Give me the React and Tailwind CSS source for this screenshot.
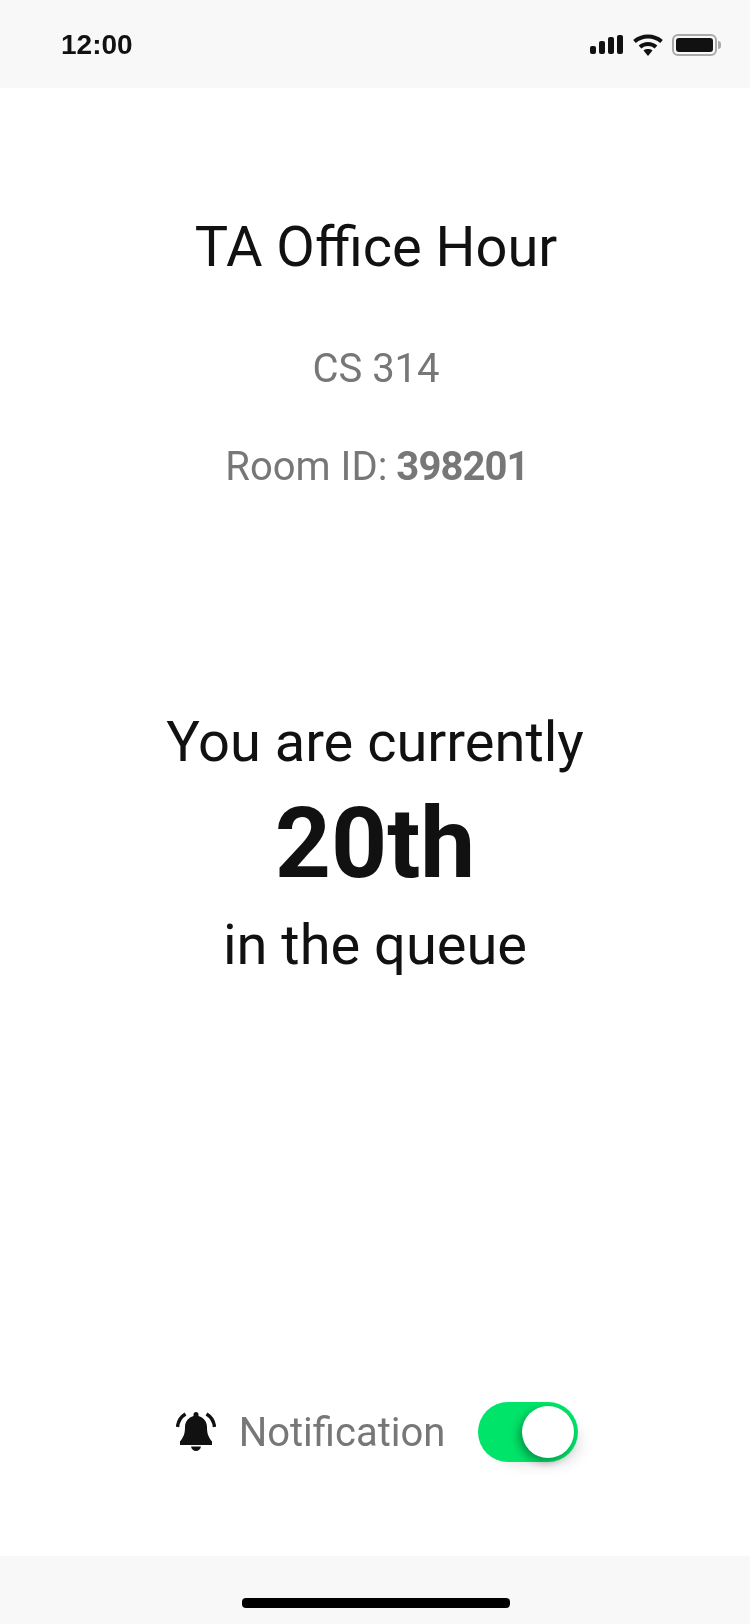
const StatusIcons = () => (
  <div className="flex items-center">
    <svg width="33" height="20" viewBox="0 0 33 20" fill="#111">
      <rect x="0" y="11" width="6" height="8" rx="2" />
      <rect x="9" y="6" width="6" height="13" rx="2" />
      <rect x="18" y="2" width="6" height="17" rx="2" />
      <rect x="27" y="0" width="6" height="19" rx="2" />
    </svg>
    <svg className="ml-[10px]" width="30" height="22" viewBox="0 0 30 22" fill="none" stroke="#111" strokeWidth="4">
      <path d="M1.500 7.500C9 .8 21 .8 28.500 7.500" />
      <path d="M7 13C11.500 9 18.500 9 23 13" />
      <path d="M10.500 16.500 L15 22 L19.500 16.500 C17 14.600 13 14.600 10.500 16.500Z" fill="#111" stroke="none" />
    </svg>
    <div className="ml-[9px] flex items-center">
      <div className="w-[45px] h-[22px] rounded-[6px] border-2 border-[#aaaaaa] p-[2px]">
        <div className="w-full h-full rounded-[3px] bg-[#111111]" />
      </div>
      <div className="w-[3px] h-[8px] ml-[1px] rounded-r-full bg-[#aaaaaa]" />
    </div>
  </div>
);

const Bell = () => (
  <svg width="40" height="40" viewBox="0 0 40 40" fill="#111">
    <path d="M20 0c1.500 0 2.500 1 2.500 2.500V4c5 1.500 8.500 5.500 8.500 11 0 6 1 9.500 5 14.500V33H4v-3.500c4-5 5-8.500 5-14.500 0-5.500 3.500-9.500 8.500-11V2.500C17.500 1 18.500 0 20 0z" />
    <path d="M15 34.500h10c-.6 2.800-2.500 4.500-5 4.500s-4.400-1.700-5-4.500z" />
    <path d="M9.500 2C4.500 5 2 9.500 1.500 15" fill="none" stroke="#111" strokeWidth="3.400" />
    <path d="M30.500 2c5 3 7.500 7.500 8 13" fill="none" stroke="#111" strokeWidth="3.400" />
  </svg>
);

export default function App() {
  return (
    <div className="w-[750px] h-[1624px] flex flex-col bg-white font-['Roboto',sans-serif] text-center overflow-hidden">
      <div className="h-[88px] shrink-0 bg-[#f8f8f8] flex items-center justify-between pl-[61px] pr-[29px] pt-[1px]">
        <span className="font-['Liberation_Sans',sans-serif] font-bold text-[28px] leading-[32px] text-[#111111] will-change-transform">12:00</span>
        <StatusIcons />
      </div>

      <div className="flex-1 flex flex-col items-center will-change-transform">
        <h1 className="mt-[126px] pl-[2px] text-[56px] leading-[66px] font-normal text-[#111111]">TA Office Hour</h1>
        <p className="mt-[65px] pl-[2px] text-[40px] leading-[48px] text-[#777777]">CS 314</p>
        <p className="mt-[50px] pl-[4px] text-[40px] leading-[48px] text-[#777777]">
          Room ID: <span className="-ml-[1px] font-bold tracking-[-0.9px]">398201</span>
        </p>

        <p className="mt-[218px] text-[56px] leading-[66px] text-[#111111]">You are currently</p>
        <p className="mt-[13px] text-[98px] leading-[112px] font-bold text-[#111111]">20th</p>
        <p className="mt-[12px] text-[56px] leading-[66px] text-[#111111]">in the queue</p>

        <div className="mt-auto mb-[94px] pl-[4px] flex items-center">
          <Bell />
          <span className="ml-[23px] pt-[2px] text-[40px] leading-[48px] text-[#777777]">Notification</span>
          <div className="ml-[33px] w-[100px] h-[60px] rounded-full bg-[#00e469] p-[4px] flex justify-end shadow-[10px_10px_14px_-8px_rgba(0,0,0,0.12)]">
            <div className="w-[52px] h-[52px] rounded-full bg-white shadow-[-3px_4px_10px_rgba(0,0,0,0.35)]" />
          </div>
        </div>
      </div>

      <div className="h-[68px] shrink-0 bg-[#f8f8f8] flex justify-center pt-[42px] pl-[1px]">
        <div className="w-[268px] h-[10px] rounded-[4px] bg-black" />
      </div>
    </div>
  );
}
